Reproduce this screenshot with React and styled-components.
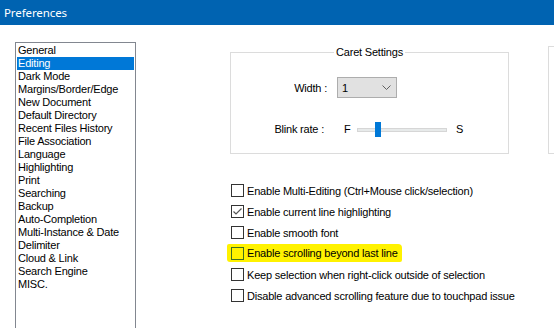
import React from "react";
import styled, { createGlobalStyle } from "styled-components";

const Global = createGlobalStyle`
  html, body { margin: 0; padding: 0; background: #ffffff; }
  #root { width: 554px; height: 328px; overflow: hidden; }
`;

const Window = styled.div`
  width: 554px;
  height: 328px;
  overflow: hidden;
  background: #ffffff;
  font-family: "Liberation Sans", Arial, sans-serif;
  font-size: 11px;
  letter-spacing: -0.2px;
  color: #000000;
  display: flex;
  flex-direction: column;
`;

const TitleBar = styled.div`
  height: 25px;
  flex: none;
  background: #0063b1;
  color: #ffffff;
  font-family: "Noto Sans", "Liberation Sans", sans-serif;
  font-size: 11.5px;
  letter-spacing: -0.1px;
  display: flex;
  align-items: center;
  padding-left: 4px;
  padding-bottom: 1px;
  box-sizing: border-box;
`;

const Body = styled.div`
  flex: 1;
  display: flex;
  padding: 17px 0 0 15px;
  gap: 94px;
  min-height: 0;
`;

const ListBox = styled.ul`
  list-style: none;
  margin: 0;
  padding: 1px;
  width: 117px;
  height: 300px;
  flex: none;
  border: 1px solid #828790;
  box-sizing: content-box;
`;

const ListItem = styled.li`
  height: 13px;
  line-height: 13px;
  padding-left: 1px;
  white-space: nowrap;
  background: ${(p) => (p.$selected ? "#0078d7" : "transparent")};
  color: ${(p) => (p.$selected ? "#ffffff" : "#000000")};
`;

const RightPane = styled.div`
  display: flex;
  flex-direction: column;
  padding-top: 4px;
`;

const GroupRow = styled.div`
  display: flex;
  gap: 39px;
`;

const GroupBox = styled.fieldset`
  margin: 0;
  padding: 0;
  width: ${(p) => p.$width}px;
  height: 108px;
  box-sizing: border-box;
  border: 1px solid #dcdcdc;
  flex: none;
  display: flex;
  flex-direction: column;
  min-width: 0;
`;

const Legend = styled.legend`
  margin: 0 auto;
  padding: 0 2px;
  font-size: 11px;
  line-height: 13px;
`;

const FieldRow = styled.div`
  display: flex;
  align-items: center;
  height: 21px;
  margin-top: ${(p) => p.$top}px;
`;

const FieldLabel = styled.span`
  width: ${(p) => p.$width}px;
  text-align: right;
  flex: none;
  white-space: nowrap;
  margin-right: ${(p) => p.$gap}px;
`;

const Combo = styled.div`
  width: 60px;
  height: 21px;
  box-sizing: border-box;
  background: #e1e1e1;
  border: 1px solid #adadad;
  display: flex;
  align-items: center;
  justify-content: space-between;
  padding: 0 5px 0 4px;
`;

const SliderEnd = styled.span`
  width: 8px;
  flex: none;
`;

const Track = styled.div`
  position: relative;
  width: 90px;
  height: 4px;
  box-sizing: border-box;
  background: #e7eaea;
  border: 1px solid #d6d6d6;
  margin: 2px 9px 0 5px;
`;

const Thumb = styled.div`
  position: absolute;
  left: 17px;
  top: -7px;
  width: 6px;
  height: 15px;
  background: #0078d7;
`;

const Checks = styled.div`
  display: flex;
  flex-direction: column;
  margin-top: 26px;
  padding-left: 1px;
`;

const CheckRow = styled.div`
  display: flex;
  align-items: center;
  height: 21px;
  align-self: flex-start;
  white-space: nowrap;
  ${(p) =>
    p.$highlight
      ? `background: #fff200;
         margin-left: -4px;
         padding: 0 4px 0 4px;
         height: 18px;
         margin-top: 1px;
         margin-bottom: 2px;
         border-radius: 2px 4px 2px 3px;`
      : ""}
`;

const Box = styled.span`
  width: 13px;
  height: 13px;
  box-sizing: border-box;
  border: 1px solid ${(p) => (p.$highlight ? "#3f6f22" : "#333333")};
  background: ${(p) => (p.$highlight ? "transparent" : "#ffffff")};
  margin-right: 3px;
  flex: none;
  display: flex;
  align-items: center;
  justify-content: center;
`;

const items = [
  "General",
  "Editing",
  "Dark Mode",
  "Margins/Border/Edge",
  "New Document",
  "Default Directory",
  "Recent Files History",
  "File Association",
  "Language",
  "Highlighting",
  "Print",
  "Searching",
  "Backup",
  "Auto-Completion",
  "Multi-Instance & Date",
  "Delimiter",
  "Cloud & Link",
  "Search Engine",
  "MISC.",
];

const checks = [
  { label: "Enable Multi-Editing (Ctrl+Mouse click/selection)" },
  { label: "Enable current line highlighting", checked: true },
  { label: "Enable smooth font" },
  { label: "Enable scrolling beyond last line", highlight: true },
  { label: "Keep selection when right-click outside of selection" },
  { label: "Disable advanced scrolling feature due to touchpad issue" },
];

export default function App() {
  return (
    <Window>
      <Global />
      <TitleBar>Preferences</TitleBar>
      <Body>
        <ListBox>
          {items.map((it) => (
            <ListItem key={it} $selected={it === "Editing"}>
              {it}
            </ListItem>
          ))}
        </ListBox>
        <RightPane>
          <GroupRow>
            <GroupBox $width={279}>
              <Legend>Caret Settings</Legend>
              <FieldRow $top={18}>
                <FieldLabel $width={96} $gap={10}>Width :</FieldLabel>
                <Combo>
                  <span>1</span>
                  <svg width="9" height="5" viewBox="0 0 9 5">
                    <path d="M0.5 0.5 L4.5 4.5 L8.5 0.5" fill="none" stroke="#606060" strokeWidth="1" />
                  </svg>
                </Combo>
              </FieldRow>
              <FieldRow $top={20}>
                <FieldLabel $width={93} $gap={20}>Blink rate :</FieldLabel>
                <SliderEnd>F</SliderEnd>
                <Track>
                  <Thumb />
                </Track>
                <SliderEnd>S</SliderEnd>
              </FieldRow>
            </GroupBox>
            <GroupBox $width={100} />
          </GroupRow>
          <Checks>
            {checks.map((c) => (
              <CheckRow key={c.label} $highlight={c.highlight}>
                <Box $highlight={c.highlight}>
                  {c.checked && (
                    <svg width="11" height="11" viewBox="0 0 11 11">
                      <path d="M1.5 5.5 L4 8 L9.5 2.5" fill="none" stroke="#555555" strokeWidth="1.2" />
                    </svg>
                  )}
                </Box>
                {c.label}
              </CheckRow>
            ))}
          </Checks>
        </RightPane>
      </Body>
    </Window>
  );
}
